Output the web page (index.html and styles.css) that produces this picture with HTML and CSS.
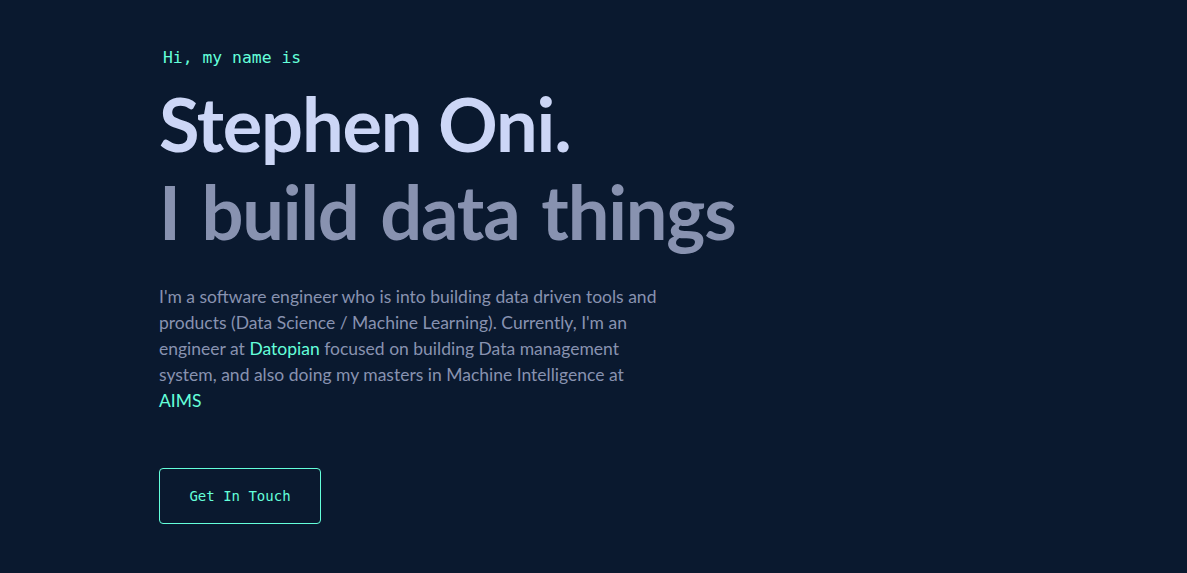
FILE: index.html
```html
<!DOCTYPE html>
<html lang="en">
<head>
<meta charset="utf-8">
<title>Stephen Oni</title>
<link rel="stylesheet" href="styles.css">
</head>
<body>
<main class="page">
  <section class="hero">
    <h1 class="hero-intro">Hi, my name is</h1>
    <h2 class="big-heading name">Stephen Oni.</h2>
    <h3 class="big-heading tagline">I build data things</h3>
    <p class="hero-text">I'm a software engineer who is into building data driven tools and products (Data Science / Machine Learning). Currently, I'm an engineer at <a class="link" href="#">Datopian</a> focused on building Data management system, and also doing my masters in Machine Intelligence at <a class="link" href="#">AIMS</a></p>
    <a class="btn" href="#">Get In Touch</a>
  </section>
</main>
</body>
</html>
```

FILE: styles.css
```css
html, body {
  margin: 0;
  padding: 0;
  background: #0a192f;
}
body {
  font-family: "Lato", "Liberation Sans", sans-serif;
  color: #8892b0;
}
.page {
  padding: 0 159px;
}
.hero {
  display: flex;
  flex-direction: column;
  align-items: flex-start;
  padding-top: 44px;
}
.hero-intro {
  margin: 0 0 8px 4px;
  font-family: "DejaVu Sans Mono", monospace;
  font-size: 16.4px;
  font-weight: 400;
  line-height: 28px;
  color: #64ffda;
}
.big-heading {
  margin: 0;
  font-size: 74px;
  font-weight: 700;
  line-height: 88px;
  letter-spacing: -1.2px;
}
.name {
  color: #ccd6f6;
}
.tagline {
  color: #8892b0;
  word-spacing: 5px;
}
.hero-text {
  margin: 28px 0 0;
  max-width: 505px;
  font-size: 17.5px;
  line-height: 26px;
}
.link {
  color: #64ffda;
  text-decoration: none;
}
.btn {
  margin-top: 54px;
  box-sizing: border-box;
  width: 162px;
  height: 56px;
  display: flex;
  align-items: center;
  justify-content: center;
  border: 1px solid #64ffda;
  border-radius: 4px;
  color: #64ffda;
  font-family: "DejaVu Sans Mono", monospace;
  font-size: 14px;
  text-decoration: none;
}
```
